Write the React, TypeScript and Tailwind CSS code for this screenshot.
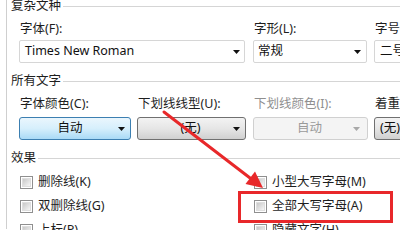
import React from "react";

const FONT = { fontFamily: '"Noto Sans", "Noto Sans CJK SC", sans-serif' };

function Arrow({ disabled = false }: { disabled?: boolean }) {
  return (
    <svg width="7" height="4" viewBox="0 0 7 4" className="shrink-0">
      <path d="M0 0 H7 L3.5 4 Z" fill={disabled ? "#a8a8a8" : "#111"} />
    </svg>
  );
}

function GroupHeader({ title, className = "" }: { title: string; className?: string }) {
  return (
    <div className={`flex items-center h-[14px] gap-[2px] ${className}`}>
      <span className="text-[12.5px] leading-[14px] text-[#1e1e1e] whitespace-nowrap">{title}</span>
      <div className="flex-1 h-px bg-[#d5d5d5]" />
    </div>
  );
}

function Label({ text, disabled = false, w }: { text: string; disabled?: boolean; w: string }) {
  return (
    <div
      className={`${w} shrink-0 pl-[1px] text-[12.5px] leading-[14px] whitespace-nowrap ${
        disabled ? "text-[#8f8f8f]" : "text-[#1e1e1e]"
      }`}
    >
      {text}
    </div>
  );
}

function Checkbox({ label }: { label: string }) {
  return (
    <div className="flex items-center h-[24px] gap-[5px]">
      <div className="w-[13px] h-[13px] shrink-0 border border-[#8f8f8f] bg-white p-[1px]">
        <div className="w-full h-full bg-gradient-to-br from-[#c8c8c8] to-[#f6f6f6] border border-[#dedede]" />
      </div>
      <span className="text-[12.5px] leading-[14px] text-[#1e1e1e] whitespace-nowrap">{label}</span>
    </div>
  );
}

export default function App() {
  return (
    <div className="relative w-[400px] h-[230px] overflow-hidden bg-white" style={FONT}>
      <div className="ml-[6px] h-full w-[520px] border-l border-[#cfcfcf] pl-[4px]">
        {/* 复杂文种 */}
        <GroupHeader title="复杂文种" className="-mt-[1px]" />
        <div className="pl-[8px]">
          <div className="flex mt-[9px] gap-0">
            <Label text="字体(F):" w="w-[234px]" />
            <Label text="字形(L):" w="w-[121px]" />
            <Label text="字号(S):" w="w-[120px]" />
          </div>
          <div className="flex mt-[4px] gap-[8px]">
            <div className="w-[226px] h-[23px] flex items-center border border-[#d6d6d6] rounded-[2px] bg-white pl-[5px] pr-[4px]">
              <span className="flex-1 text-[12.5px] text-[#111]">Times New Roman</span>
              <Arrow />
            </div>
            <div className="w-[114px] h-[23px] flex items-center border border-[#d6d6d6] rounded-[2px] bg-white pl-[4px] pr-[5px]">
              <span className="flex-1 text-[12.5px] text-[#111]">常规</span>
              <Arrow />
            </div>
            <div className="ml-[-1px] w-[100px] h-[23px] flex items-center border border-[#d6d6d6] rounded-[2px] bg-white pl-[5px]">
              <span className="flex-1 text-[12.5px] text-[#111]">二号</span>
            </div>
          </div>
        </div>

        {/* 所有文字 */}
        <GroupHeader title="所有文字" className="mt-[11px]" />
        <div className="pl-[8px]">
          <div className="flex mt-[9px]">
            <Label text="字体颜色(C):" w="w-[118px]" />
            <Label text="下划线线型(U):" w="w-[116px]" />
            <Label text="下划线颜色(I):" w="w-[121px]" disabled />
            <Label text="着重号(·):" w="w-[100px]" />
          </div>
          <div className="flex mt-[6px]">
            <div className="w-[112px] h-[23px] flex items-center border border-[#3c7fb1] rounded-[3px] bg-gradient-to-b from-[#eaf6fd] via-[#d6effc] to-[#a9daf6] pr-[5px]">
              <span className="flex-1 text-center text-[12.5px] text-[#111] pl-[2px]">自动</span>
              <Arrow />
            </div>
            <div className="ml-[6px] w-[109px] h-[23px] flex items-center border border-[#707070] rounded-[3px] bg-gradient-to-b from-[#f3f3f3] via-[#e6e6e6] to-[#d0d0d0] pr-[5px]">
              <span className="flex-1 text-center text-[12.5px] text-[#111] pl-[10px]">(无)</span>
              <Arrow />
            </div>
            <div className="ml-[7px] w-[115px] h-[23px] flex items-center border border-[#d0d0d0] rounded-[3px] bg-[#f4f4f4] pr-[7px]">
              <span className="flex-1 text-center text-[12.5px] text-[#9a9a9a] pl-[12px]">自动</span>
              <Arrow disabled />
            </div>
            <div className="ml-[6px] w-[80px] h-[23px] flex items-center border border-[#707070] rounded-[3px] bg-gradient-to-b from-[#f3f3f3] via-[#e6e6e6] to-[#d0d0d0] pl-[5px]">
              <span className="text-[12.5px] text-[#111]">(无)</span>
            </div>
          </div>
        </div>

        {/* 效果 */}
        <GroupHeader title="效果" className="mt-[11px]" />
        <div className="pl-[9px] mt-[5px] flex">
          <div className="w-[233px]">
            <Checkbox label="删除线(K)" />
            <Checkbox label="双删除线(G)" />
            <Checkbox label="上标(P)" />
          </div>
          <div className="pl-[1px]">
            <Checkbox label="小型大写字母(M)" />
            <Checkbox label="全部大写字母(A)" />
            <Checkbox label="隐藏文字(H)" />
          </div>
        </div>
      </div>

      {/* annotation overlay */}
      <div className="absolute left-[238px] top-[191px] w-[155px] h-[32px] border-[3px] border-[#e8282a] pointer-events-none" />
      <svg className="absolute inset-0 pointer-events-none" width="400" height="230" viewBox="0 0 400 230">
        <line x1="164" y1="112" x2="252" y2="179.5" stroke="#e8282a" strokeWidth="3" strokeLinecap="round" />
        <path d="M263 188 L245.5 184 L255 171.5 Z" fill="#e8282a" />
      </svg>
    </div>
  );
}
